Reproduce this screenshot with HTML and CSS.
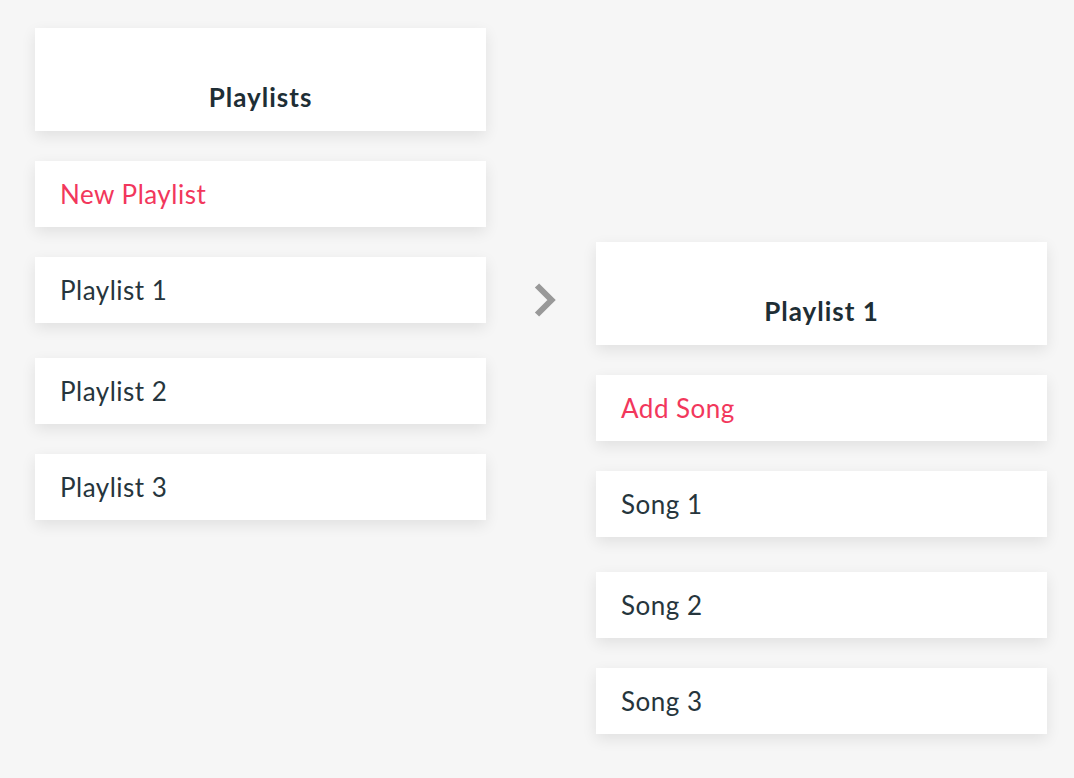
FILE: index.html
```html
<!DOCTYPE html>
<html lang="en">
<head>
<meta charset="UTF-8">
<meta name="viewport" content="width=device-width, initial-scale=1.0">
<title>Playlists</title>
<link rel="stylesheet" href="styles.css">
</head>
<body>
    <div class="board">
        <div class="column">
            <div class="card header">Playlists</div>
            <div class="card action">New Playlist</div>
            <div class="card">Playlist 1</div>
            <div class="card spaced">Playlist 2</div>
            <div class="card">Playlist 3</div>
        </div>
        <div class="arrow">
            <svg width="30" height="40" viewBox="0 0 30 40">
                <polyline points="7,5.5 21.5,20 7,34.5" fill="none" stroke="#999" stroke-width="6"/>
            </svg>
        </div>
        <div class="column detail">
            <div class="card header">Playlist 1</div>
            <div class="card action">Add Song</div>
            <div class="card">Song 1</div>
            <div class="card spaced">Song 2</div>
            <div class="card">Song 3</div>
        </div>
    </div>
</body>
</html>
```

FILE: styles.css
```css
body {
    margin: 0;
    padding: 0;
    background-color: #f6f6f6;
    font-family: Lato, "Liberation Sans", sans-serif;
    color: #26353c;
}
.board {
    display: flex;
    align-items: flex-start;
    padding: 28px 0 40px 35px;
}
.column {
    width: 451px;
    display: flex;
    flex-direction: column;
    gap: 30px;
}
.detail {
    margin-top: 214px;
}
.arrow {
    width: 110px;
    padding: 252px 0 0 44px;
    box-sizing: border-box;
}
.arrow svg {
    display: block;
}
.card {
    height: 66px;
    box-sizing: border-box;
    padding: 0 25px;
    display: flex;
    align-items: center;
    background-color: white;
    box-shadow: 0 5px 14px rgba(0, 0, 0, 0.09);
    font-size: 26px;
    letter-spacing: 0.5px;
}
.header {
    height: 103px;
    justify-content: center;
    align-items: flex-end;
    padding-bottom: 18px;
    font-weight: bold;
    letter-spacing: 1px;
    color: #1e2e35;
}
.action {
    color: #f2375c;
}
.spaced {
    margin-top: 5px;
}
```
